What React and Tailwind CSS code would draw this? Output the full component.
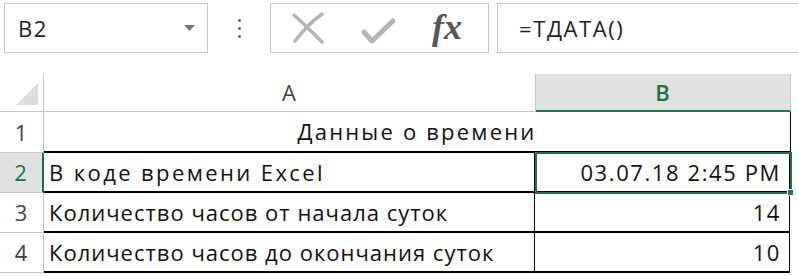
import React from 'react'

const font = { fontFamily: '"Open Sans", "Liberation Sans", sans-serif' }

function Toolbar() {
  return (
    <div className="flex h-[56px] items-start pt-[3px] pl-[4px]">
      <div className="relative flex h-[50px] w-[204px] items-center border border-[#c6c6c6] bg-white pl-[13px] text-[22px] tracking-[1.6px] text-[#222]">
        B2
        <svg className="absolute right-[12px] top-[21px]" width="11" height="7" viewBox="0 0 11 7">
          <path d="M0 0 H11 L5.5 6 Z" fill="#777" />
        </svg>
      </div>
      <div className="flex w-[62px] flex-col items-center gap-[5px] pt-[16px]">
        <div className="h-[3px] w-[3px] rounded-full bg-[#666]" />
        <div className="h-[3px] w-[3px] rounded-full bg-[#666]" />
        <div className="h-[3px] w-[3px] rounded-full bg-[#666]" />
      </div>
      <div className="flex h-[50px] w-[219px] items-center border border-[#c6c6c6] bg-white">
        <svg className="ml-[20px]" width="34" height="32" viewBox="0 0 34 32">
          <path d="M3 3 Q14 13 31 30" stroke="#b4b4b4" strokeWidth="3.5" fill="none" strokeLinecap="round" />
          <path d="M31 2 Q17 12 4 29" stroke="#b4b4b4" strokeWidth="3.5" fill="none" strokeLinecap="round" />
        </svg>
        <svg className="ml-[36px] mt-[6px]" width="34" height="26" viewBox="0 0 34 26">
          <path d="M3 14 L11 23 L32 3" stroke="#b4b4b4" strokeWidth="5" fill="none" strokeLinecap="round" strokeLinejoin="round" />
        </svg>
        <span className="ml-[37px] mt-[-2px] text-[36px] font-bold italic leading-none text-[#555]" style={{ fontFamily: '"Liberation Serif", serif' }}>
          fx
        </span>
      </div>
      <div className="ml-[8px] flex h-[50px] flex-1 items-center border border-r-0 border-[#c6c6c6] bg-white pl-[21px] text-[22px] tracking-[1.6px] text-[#222]">
        =ТДАТА()
      </div>
    </div>
  )
}

function RowHead({ n, active }) {
  return (
    <div className={`flex w-[44px] items-center justify-center border-r border-b border-[#c6c6c6] text-[22px] ${active ? 'bg-[#e1e1e1] text-[#217346] border-r-2 border-r-[#217346]' : 'bg-white text-[#444]'}`}>
      {n}
    </div>
  )
}

export default function App() {
  const rows = [
    ['Количество часов от начала суток', '14'],
    ['Количество часов до окончания суток', '10'],
  ]
  return (
    <div className="h-[276px] w-[798px] overflow-hidden bg-white" style={font}>
      <Toolbar />
      <div className="relative mt-[18px] w-[792px] tracking-[1px]">
        <div className="flex h-[38px]">
          <div className="relative w-[44px] border-r border-b border-[#c6c6c6]">
            <svg className="absolute left-[16px] top-[9px]" width="22" height="22" viewBox="0 0 22 22">
              <path d="M22 0 V22 H0 Z" fill="#dcdcdc" />
            </svg>
          </div>
          <div className="flex w-[492px] items-center justify-center border-r border-b border-[#c6c6c6] text-[22px] text-[#444]">A</div>
          <div className="flex w-[255px] items-center justify-center border-b-2 border-r border-b-[#217346] border-r-[#c6c6c6] bg-[#e1e1e1] text-[22px] font-semibold text-[#217346]">B</div>
        </div>
        <div className="flex h-[41px]">
          <RowHead n="1" />
          <div className="flex w-[747px] items-center justify-center border-r border-b-2 border-black text-[22px] tracking-[2.2px] text-[#111]">
            Данные о времени
          </div>
        </div>
        <div className="flex h-[40px]">
          <RowHead n="2" active />
          <div className="flex w-[491px] items-center border-r border-b-2 border-black pl-[5px] text-[22px] tracking-[2.4px] text-[#111]">В коде времени Excel</div>
          <div className="flex w-[255px] items-center justify-end border-r border-b-2 border-black pr-[8px] text-[22px] tracking-[1.6px] text-[#111]">03.07.18 2:45 PM</div>
        </div>
        {rows.map(([a, b], i) => (
          <div key={i} className="flex h-[40px]">
            <RowHead n={String(i + 3)} />
            <div className="flex w-[491px] items-center border-r border-b-2 border-black pl-[5px] text-[22px] text-[#111]">{a}</div>
            <div className="flex w-[255px] items-center justify-end border-r border-b-2 border-black pr-[8px] text-[22px] tracking-[1.6px] text-[#111]">{b}</div>
          </div>
        ))}
        <div className="absolute left-[535px] top-[78px] h-[42px] w-[257px] border-2 border-[#217346]" />
        <div className="absolute left-[787px] top-[115px] h-[7px] w-[7px] border border-white bg-[#217346]" />
      </div>
    </div>
  )
}
